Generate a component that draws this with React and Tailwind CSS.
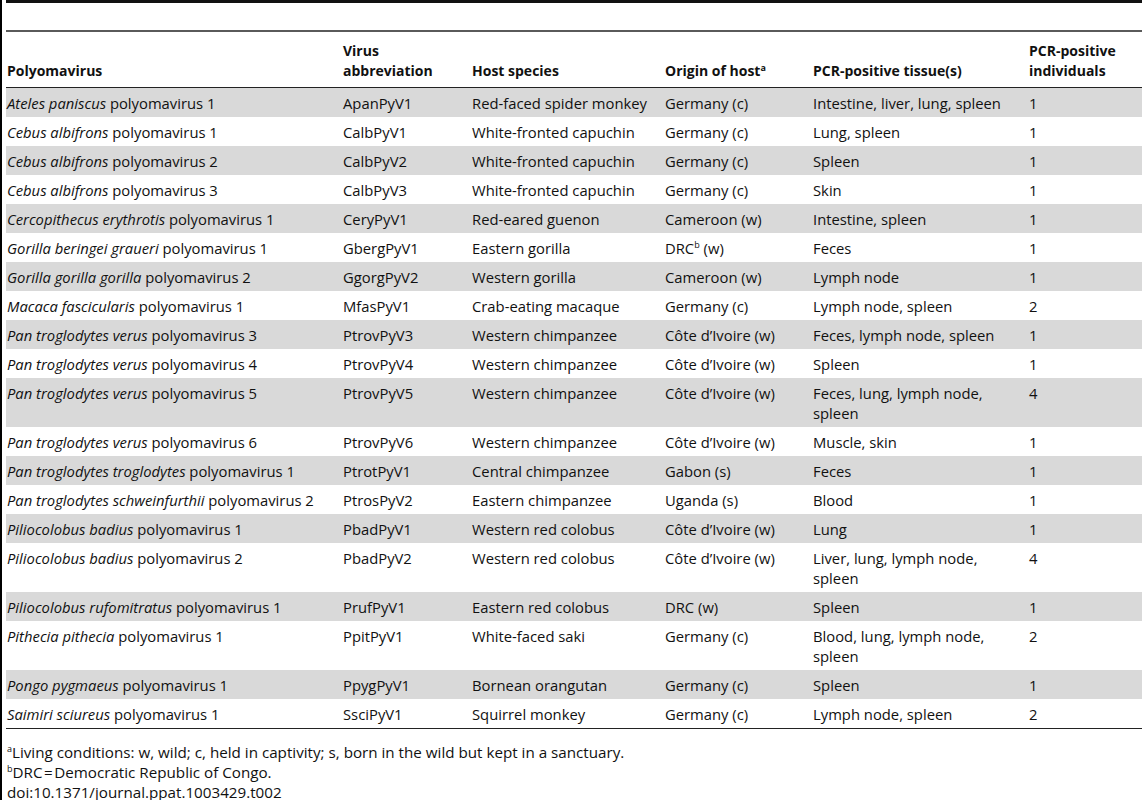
import React from 'react';

const rows = [
  ['Ateles paniscus', ' polyomavirus 1', 'ApanPyV1', 'Red-faced spider monkey', 'Germany (c)', 'Intestine, liver, lung, spleen', '1'],
  ['Cebus albifrons', ' polyomavirus 1', 'CalbPyV1', 'White-fronted capuchin', 'Germany (c)', 'Lung, spleen', '1'],
  ['Cebus albifrons', ' polyomavirus 2', 'CalbPyV2', 'White-fronted capuchin', 'Germany (c)', 'Spleen', '1'],
  ['Cebus albifrons', ' polyomavirus 3', 'CalbPyV3', 'White-fronted capuchin', 'Germany (c)', 'Skin', '1'],
  ['Cercopithecus erythrotis', ' polyomavirus 1', 'CeryPyV1', 'Red-eared guenon', 'Cameroon (w)', 'Intestine, spleen', '1'],
  ['Gorilla beringei graueri', ' polyomavirus 1', 'GbergPyV1', 'Eastern gorilla', 'DRC_b', 'Feces', '1'],
  ['Gorilla gorilla gorilla', ' polyomavirus 2', 'GgorgPyV2', 'Western gorilla', 'Cameroon (w)', 'Lymph node', '1'],
  ['Macaca fascicularis', ' polyomavirus 1', 'MfasPyV1', 'Crab-eating macaque', 'Germany (c)', 'Lymph node, spleen', '2'],
  ['Pan troglodytes verus', ' polyomavirus 3', 'PtrovPyV3', 'Western chimpanzee', 'Côte d’Ivoire (w)', 'Feces, lymph node, spleen', '1'],
  ['Pan troglodytes verus', ' polyomavirus 4', 'PtrovPyV4', 'Western chimpanzee', 'Côte d’Ivoire (w)', 'Spleen', '1'],
  ['Pan troglodytes verus', ' polyomavirus 5', 'PtrovPyV5', 'Western chimpanzee', 'Côte d’Ivoire (w)', 'Feces, lung, lymph node, spleen', '4'],
  ['Pan troglodytes verus', ' polyomavirus 6', 'PtrovPyV6', 'Western chimpanzee', 'Côte d’Ivoire (w)', 'Muscle, skin', '1'],
  ['Pan troglodytes troglodytes', ' polyomavirus 1', 'PtrotPyV1', 'Central chimpanzee', 'Gabon (s)', 'Feces', '1'],
  ['Pan troglodytes schweinfurthii', ' polyomavirus 2', 'PtrosPyV2', 'Eastern chimpanzee', 'Uganda (s)', 'Blood', '1'],
  ['Piliocolobus badius', ' polyomavirus 1', 'PbadPyV1', 'Western red colobus', 'Côte d’Ivoire (w)', 'Lung', '1'],
  ['Piliocolobus badius', ' polyomavirus 2', 'PbadPyV2', 'Western red colobus', 'Côte d’Ivoire (w)', 'Liver, lung, lymph node, spleen', '4'],
  ['Piliocolobus rufomitratus', ' polyomavirus 1', 'PrufPyV1', 'Eastern red colobus', 'DRC (w)', 'Spleen', '1'],
  ['Pithecia pithecia', ' polyomavirus 1', 'PpitPyV1', 'White-faced saki', 'Germany (c)', 'Blood, lung, lymph node, spleen', '2'],
  ['Pongo pygmaeus', ' polyomavirus 1', 'PpygPyV1', 'Bornean orangutan', 'Germany (c)', 'Spleen', '1'],
  ['Saimiri sciureus', ' polyomavirus 1', 'SsciPyV1', 'Squirrel monkey', 'Germany (c)', 'Lymph node, spleen', '2'],
];

const grid = 'grid grid-cols-[336px_129px_193px_148px_216px_1fr]';
const cell = 'pl-[1px] leading-[20px]';
const sup = 'text-[9px] align-top relative top-[2px] leading-none';

function Origin({ value }) {
  if (value === 'DRC_b') {
    return <>DRC<sup className={sup}>b</sup> (w)</>;
  }
  return value;
}

export default function App() {
  return (
    <div className="min-h-[800px] bg-white border-l-2 border-black pl-[4px] text-[14.8px] text-[#111] font-['Open_Sans',sans-serif]">
      <div className="h-[3px] bg-[#111]" />
      <div className="h-[27px]" />
      <div className="h-[2px] bg-[#5a5a5a]" />

      {/* Header */}
      <div className={`${grid} h-[56px] items-end pb-[6px] text-[14px] font-bold border-b border-[#222]`}>
        <div className={cell}>Polyomavirus</div>
        <div className={cell}>Virus<br />abbreviation</div>
        <div className={cell}>Host species</div>
        <div className={cell}>
          Origin of host<sup className={sup}>a</sup>
        </div>
        <div className={cell}>PCR-positive tissue(s)</div>
        <div className={cell}>PCR-positive<br />individuals</div>
      </div>

      {/* Rows */}
      {rows.map((r, i) => (
        <div key={i} className={`${grid} pt-[5px] pb-[4px] ${i % 2 === 0 ? 'bg-[#d9d9d9]' : 'bg-white'}`}>
          <div className={cell}><i>{r[0]}</i>{r[1]}</div>
          <div className={cell}>{r[2]}</div>
          <div className={cell}>{r[3]}</div>
          <div className={cell}><Origin value={r[4]} /></div>
          <div className={`${cell} pr-[20px]`}>{r[5]}</div>
          <div className={cell}>{r[6]}</div>
        </div>
      ))}

      <div className="h-[1px] bg-[#222]" />

      {/* Footnotes */}
      <div className="pt-[13px] pl-[1px] leading-[20px] text-[15.2px]">
        <div><sup className={sup}>a</sup>Living conditions: w, wild; c, held in captivity; s, born in the wild but kept in a sanctuary.</div>
        <div><sup className={sup}>b</sup>DRC&#8202;=&#8202;Democratic Republic of Congo.</div>
        <div>doi:10.1371/journal.ppat.1003429.t002</div>
      </div>
    </div>
  );
}
